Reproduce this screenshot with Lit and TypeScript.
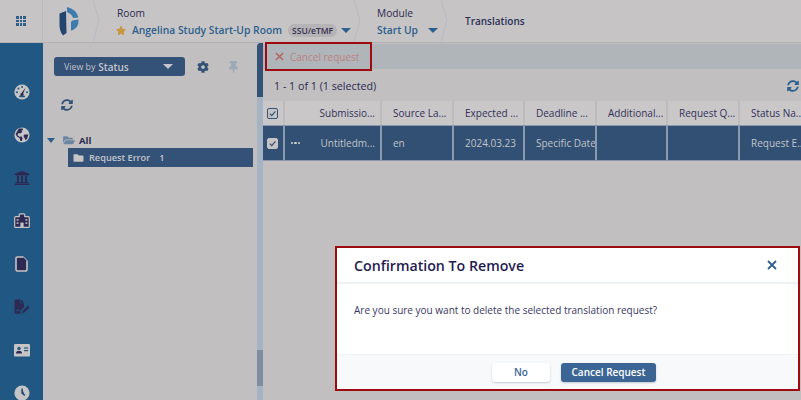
import { LitElement, html, css, svg } from "lit";
import { customElement } from "lit/decorators.js";

const SYNC = "M370.72 133.28C339.458 104.008 298.888 87.962 255.848 88c-77.458.068-144.328 53.178-162.791 126.85-1.344 5.363-6.122 9.15-11.651 9.15H24.103c-7.498 0-13.194-6.807-11.807-14.176C33.933 94.924 134.813 8 256 8c66.448 0 126.791 26.136 171.315 68.685L463.03 40.97C478.149 25.851 504 36.559 504 57.941V192c0 13.255-10.745 24-24 24H345.941c-21.382 0-32.09-25.851-16.971-40.971l41.75-41.749zM32 296h134.059c21.382 0 32.09 25.851 16.971 40.971l-41.75 41.75c31.262 29.273 71.835 45.319 114.876 45.28 77.418-.07 144.315-53.144 162.787-126.849 1.344-5.363 6.122-9.15 11.651-9.15h57.304c7.498 0 13.194 6.807 11.807 14.176C478.067 417.076 377.187 504 256 504c-66.448 0-126.791-26.136-171.315-68.685L48.97 471.03C33.851 486.149 8 475.441 8 454.059V320c0-13.255 10.745-24 24-24z";
const COG = "M487.4 315.7l-42.6-24.6c4.3-23.2 4.3-47 0-70.2l42.6-24.6c4.9-2.8 7.1-8.6 5.5-14-11.1-35.6-30-67.8-54.7-94.6-3.8-4.1-10-5.1-14.8-2.3L380.8 110c-17.9-15.4-38.5-27.3-60.8-35.1V25.8c0-5.6-3.9-10.5-9.4-11.7-36.7-8.2-74.3-7.8-109.2 0-5.5 1.2-9.4 6.1-9.4 11.7V75c-22.2 7.9-42.8 19.8-60.8 35.1L88.7 85.5c-4.9-2.8-11-1.9-14.8 2.3-24.7 26.7-43.6 58.9-54.7 94.6-1.7 5.4.6 11.2 5.5 14L67.3 221c-4.3 23.2-4.3 47 0 70.2l-42.6 24.6c-4.9 2.8-7.1 8.6-5.5 14 11.1 35.6 30 67.8 54.7 94.6 3.8 4.1 10 5.1 14.8 2.3l42.6-24.6c17.9 15.4 38.5 27.3 60.8 35.1v49.2c0 5.6 3.9 10.5 9.4 11.7 36.7 8.2 74.3 7.8 109.2 0 5.5-1.2 9.4-6.1 9.4-11.7v-49.2c22.2-7.9 42.8-19.8 60.8-35.1l42.6 24.6c4.9 2.8 11 1.9 14.8-2.3 24.7-26.7 43.6-58.9 54.7-94.6 1.5-5.5-.7-11.3-5.6-14.1zM256 336c-44.1 0-80-35.9-80-80s35.9-80 80-80 80 35.9 80 80-35.9 80-80 80z";
const STAR = "M259.3 17.8L194 150.2 47.9 171.5c-26.2 3.8-36.7 36.1-17.7 54.6l105.7 103-25 145.5c-4.5 26.3 23.2 46 46.4 33.7L288 439.6l130.7 68.7c23.2 12.2 50.9-7.4 46.4-33.7l-25-145.5 105.7-103c19-18.5 8.5-50.8-17.7-54.6L382 150.2 316.7 17.8c-11.7-23.6-45.6-23.9-57.4 0z";
const PIN = "M298.028 214.267L285.793 96H328c13.255 0 24-10.745 24-24V24c0-13.255-10.745-24-24-24H56C42.745 0 32 10.745 32 24v48c0 13.255 10.745 24 24 24h42.207L85.972 214.267C37.465 236.82 0 277.261 0 328c0 13.255 10.745 24 24 24h136v104.007c0 1.242.289 2.467.845 3.578l24 48c2.941 5.882 11.364 5.893 14.311 0l24-48a8.008 8.008 0 0 0 .845-3.578V352h136c13.255 0 24-10.745 24-24-.001-51.183-37.983-91.42-85.973-113.733z";
const FOLDER = "M464 128H272l-64-64H48C21.49 64 0 85.49 0 112v288c0 26.51 21.49 48 48 48h416c26.51 0 48-21.49 48-48V176c0-26.51-21.49-48-48-48z";
const FOLDER_OPEN = "M572.694 292.093L500.27 416.248A63.997 63.997 0 0 1 444.989 448H45.025c-18.523 0-30.064-20.093-20.731-36.093l72.424-124.155A64 64 0 0 1 152 256h399.964c18.523 0 30.064 20.093 20.73 36.093zM152 224h328v-48c0-26.51-21.49-48-48-48H272l-64-64H48C21.49 64 0 85.49 0 112v278.046l69.077-118.418C86.214 242.25 117.989 224 152 224z";
const BANK = "M496 128v16a8 8 0 0 1-8 8h-24v12c0 6.627-5.373 12-12 12H60c-6.627 0-12-5.373-12-12v-12H24a8 8 0 0 1-8-8v-16a8 8 0 0 1 4.941-7.392l232-88a7.996 7.996 0 0 1 6.118 0l232 88A8 8 0 0 1 496 128zm-24 304H40c-13.255 0-24 10.745-24 24v16a8 8 0 0 0 8 8h464a8 8 0 0 0 8-8v-16c0-13.255-10.745-24-24-24zM96 192v192H60c-6.627 0-12 5.373-12 12v20h416v-20c0-6.627-5.373-12-12-12h-36V192h-64v192h-64V192h-64v192h-64V192H96z";

const icon = (d: string, vb: string, cls: string) =>
  html`<svg class=${cls} viewBox=${vb}><path d=${d}></path></svg>`;

const NAV_FG = "#c6c4c4";
const NAV_BG = "#215783";

const navIcons = [
  svg`<circle cx="8" cy="8" r="7.6" fill=${NAV_FG}/><g fill=${NAV_BG}><circle cx="8" cy="3" r="1"/><circle cx="4.4" cy="4.6" r="1"/><circle cx="3" cy="8.2" r="1"/><circle cx="13" cy="8.2" r="1"/><path d="M11.6 3.6 L9.2 9.6 A1.6 1.6 0 1 1 7.6 9.1 Z"/><rect x="5" y="11.6" width="6" height="1.6" rx=".8"/></g>`,
  svg`<circle cx="8" cy="8" r="7.6" fill=${NAV_FG}/><g fill=${NAV_BG}><path d="M5 1.6 L8.5 1.4 L9.2 3 L7.4 3.6 L8.2 5 L6.6 6.2 L4.2 6.2 L3.4 8 L5.4 9.8 L7.6 9.6 L8.6 11.2 L7.8 14 L6.4 14 L5.6 11 L3 9.4 L1.6 7 Z"/><path d="M10.4 7.4 L14.4 7.6 L13 12 L11.4 13 L10.6 11 L9.4 9 Z"/></g>`,
  svg`<path transform="scale(.03125)" d=${BANK} fill=${NAV_FG}/>`,
  svg`<path d="M5.2 3.6 V1.8 a1 1 0 0 1 1-1 h3.6 a1 1 0 0 1 1 1 V3.6 H14.2 A1.1 1.1 0 0 1 15.3 4.7 V13.4 A1 1 0 0 1 14.3 14.4 H1.7 A1 1 0 0 1 .7 13.4 V4.7 A1.1 1.1 0 0 1 1.8 3.6 Z" fill=${NAV_BG} stroke=${NAV_FG} stroke-width="1.2"/><g fill=${NAV_FG}><path d="M7.4 2.4 h1.2 V3.6 H9.8 V4.8 H8.6 V6 H7.4 V4.8 H6.2 V3.6 H7.4 Z"/><rect x="2.6" y="6.2" width="2" height="1.4"/><rect x="11.4" y="6.2" width="2" height="1.4"/><rect x="2.6" y="9.4" width="2" height="1.4"/><rect x="11.4" y="9.4" width="2" height="1.4"/><rect x="6.4" y="9.6" width="3.2" height="4.8"/></g>`,
  svg`<path d="M3.4 1 H9 L13 5 V13.6 A1.4 1.4 0 0 1 11.6 15 H3.4 A1.4 1.4 0 0 1 2 13.6 V2.4 A1.4 1.4 0 0 1 3.4 1 Z" fill="none" stroke=${NAV_FG} stroke-width="1.6"/><path d="M9 1 V5 H13 Z" fill=${NAV_FG}/>`,
  svg`<path d="M1.6 .4 H6.6 L10 3.8 V8 L6.6 11.6 V14.8 H1.6 A1 1 0 0 1 .6 13.8 V1.4 A1 1 0 0 1 1.6 .4 Z" fill=${NAV_FG}/><path d="M6.4 .6 V4 H9.8" fill="none" stroke=${NAV_BG} stroke-width=".7"/><path d="M2 12.6 L3.6 10.2 L4.6 12 L6.2 11.2" fill="none" stroke=${NAV_BG} stroke-width=".9"/><path d="M13.8 6.6 L16 8.6 L10 14 L7.6 14.4 L8 12.2 Z" fill=${NAV_FG} stroke=${NAV_BG} stroke-width=".6"/>`,
  svg`<rect x="0" y="2" width="16" height="12.4" rx="1.2" fill=${NAV_FG}/><g fill=${NAV_BG}><circle cx="5" cy="6.4" r="1.7"/><path d="M2 11.4 Q2 8.8 5 8.8 Q8 8.8 8 11.4 Z"/><rect x="10" y="5.4" width="4.2" height="1.2"/><rect x="10" y="8" width="4.2" height="1.2"/></g>`,
  svg`<circle cx="8" cy="8" r="7.6" fill=${NAV_FG}/><path d="M8 3.4 V8.2 L10.8 10.4" fill="none" stroke=${NAV_BG} stroke-width="1.5"/>`,
];

const columns = [
  { label: "Submissio...", value: "Untitledm..." },
  { label: "Source La...", value: "en" },
  { label: "Expected ...", value: "2024.03.23" },
  { label: "Deadline ...", value: "Specific Date" },
  { label: "Additional...", value: "" },
  { label: "Request Q...", value: "" },
  { label: "Status Na..", value: "Request E.." },
];

@customElement("app-root")
export class AppRoot extends LitElement {
  static styles = css`
    :host {
      display: block;
      position: relative;
      width: 801px;
      height: 400px;
      overflow: hidden;
      font-family: "Open Sans", "Noto Sans", sans-serif;
      color: #2c2a52;
      background: #c1bfbf;
    }
    svg { display: block; flex: none; }
    svg path { fill: currentColor; }

    .top {
      display: flex;
      height: 43px;
      background: #c6c4c4;
      border-bottom: 1px solid #b3b1b5;
      box-sizing: border-box;
    }
    .apps {
      width: 43px;
      flex: none;
      display: flex;
      align-items: center;
      justify-content: center;
      border-right: 1px solid #bcbabb;
      box-sizing: border-box;
    }
    .apps-grid {
      display: grid;
      grid-template-columns: repeat(3, 2.6px);
      gap: .8px;
      width: 9.4px;
    }
    .apps-grid i { height: 2.6px; background: #315d88; display: block; }
    .crumb {
      position: relative;
      flex: none;
      box-sizing: border-box;
      height: 42px;
    }
    .crumb > .chev {
      position: absolute;
      right: -6px;
      top: 0;
      width: 7px;
      height: 42px;
      fill: none;
      stroke: #b6bcc4;
      stroke-width: 1;
    }
    .crumb > .chev polyline { fill: none; }
    .logo-crumb {
      width: 51px;
      display: flex;
      align-items: center;
      justify-content: center;
    }
    .logo { width: 20px; height: 30px; margin-left: 1px; }
    .room { width: 261px; padding: 6px 0 0 23px; }
    .module { width: 87px; padding: 6px 0 0 22px; }
    .page { padding: 0 0 0 23px; font-size: 10px; font-weight: 600; line-height: 42px; color: #2c3058; }
    .cr-label { font-size: 10.2px; font-weight: 500; line-height: 15px; color: #2c2a52; }
    .cr-value {
      display: flex;
      align-items: center;
      font-size: 10.3px;
      font-weight: 600;
      line-height: 16px;
      margin-top: 1px;
      color: #2d5f8e;
      white-space: nowrap;
    }
    .star { width: 10px; height: 9px; color: #c9973f; margin: 0 6px 0 -1px; }
    .badge {
      font-size: 8.5px;
      font-weight: 600;
      color: #33304f;
      background: #b5b3b5;
      border-radius: 7px;
      padding: 0 4px;
      line-height: 13px;
      margin: 0 4px 0 6px;
    }
    .caret {
      width: 0;
      height: 0;
      border-left: 5px solid transparent;
      border-right: 5px solid transparent;
      border-top: 5px solid #2d5f8e;
      display: block;
      flex: none;
    }
    .module .caret { margin-left: 10px; }

    .main { display: flex; height: 357px; }
    .nav {
      width: 43px;
      flex: none;
      background: #215783;
      box-sizing: border-box;
      padding-top: 27px;
      display: flex;
      flex-direction: column;
      align-items: center;
    }
    .nav-item { height: 43px; flex: none; display: flex; align-items: center; justify-content: center; }
    .nav-item svg { width: 16px; height: 16px; }

    .side { width: 214px; flex: none; box-sizing: border-box; padding: 14px 4px 0 11px; }
    .side-tools { display: flex; align-items: center; }
    .viewby {
      width: 131px;
      height: 19px;
      box-sizing: border-box;
      background: #345177;
      border-radius: 3px;
      color: #c4c6cc;
      display: flex;
      align-items: center;
      padding: 0 10px;
      font-size: 8.8px;
      white-space: nowrap;
    }
    .viewby b { font-size: 10px; font-weight: 600; margin-left: 3px; }
    .viewby .caret { margin-left: auto; margin-right: 2px; border-top-color: #c4c6cc; }
    .gear { width: 12px; height: 12px; color: #345177; margin-left: 12px; }
    .pin { width: 9px; height: 12px; color: #9ca9b8; margin-left: 20px; }
    .sync { width: 12px; height: 12px; color: #345177; }
    .side-sync { margin: 23px 0 0 7px; }
    .tree { margin: 23px 0 0 -7px; }
    .tree-all { display: flex; align-items: center; height: 12px; font-size: 9.5px; font-weight: 700; color: #2a2850; }
    .tree-all .caret { border-left-width: 4.5px; border-right-width: 4.5px; border-top-color: #2d5f8e; }
    .folder-open { width: 12px; height: 10.5px; color: #6b86a3; margin: 0 0 0 8px; }
    .tree-all span { margin-left: 4px; }
    .tree-sel {
      display: flex;
      align-items: center;
      height: 19px;
      margin: 2px 0 0 21px;
      background: #345177;
      color: #c4c6cc;
      font-size: 9.2px;
      font-weight: 600;
      box-sizing: border-box;
      padding-left: 5px;
      white-space: nowrap;
    }
    .tree-sel svg { width: 11px; height: 10px; color: #c6c4c4; margin-right: 5px; }
    .tree-sel em { font-style: normal; margin-left: 9px; }

    .split { width: 6px; flex: none; background: #a6b3c2; display: flex; flex-direction: column; }
    .split-head { height: 54px; background: #345177; border-top-left-radius: 4px; }
    .split-thumb { height: 36px; margin-top: 253px; background: #7d8da2; }

    .content { flex: 1; min-width: 0; }
    .actions {
      height: 25px;
      margin-top: 1px;
      background: #b0b5ba;
      display: flex;
      align-items: center;
      padding-left: 12px;
      font-size: 10px;
      color: #bf8182;
    }
    .actions svg { width: 9px; height: 9px; margin-right: 6px; fill: none; stroke: #b5625f; stroke-width: 1.6; }
    .actions svg path { fill: none; }
    .count {
      height: 32px;
      box-sizing: border-box;
      display: flex;
      align-items: center;
      justify-content: space-between;
      padding: 1px 0 0 11px;
      font-size: 10.7px;
      color: #2c2a52;
    }
    .count .sync { margin-right: 2px; color: #2d5f8e; }
    .table {
      display: grid;
      grid-template-columns: 22px 22px 75px 72px 71px 72px 71px 72px 61px;
      grid-template-rows: 24px 36px;
      font-size: 10px;
      white-space: nowrap;
    }
    .hcell {
      background: #c9c7c7;
      border-right: 2px solid #bdbbbb;
      box-sizing: border-box;
      display: flex;
      align-items: center;
      padding-left: 11px;
      color: #33315a;
      overflow: hidden;
    }
    .cell {
      background: #325074;
      border-right: 2px solid #8a99ad;
      border-top: 1px solid #8a99ad;
      border-bottom: 1px solid #8a99ad;
      box-sizing: border-box;
      display: flex;
      align-items: center;
      padding-left: 11px;
      color: #c0c4ca;
      overflow: hidden;
    }
    .first { padding-left: 1px; }
    .sub { justify-content: flex-end; padding: 0 5px 0 0; }
    .plain { border-right: 0; padding-left: 6px; }
    .end { border-right: 0; }
    .check {
      width: 11px;
      height: 11px;
      box-sizing: border-box;
      border: 1px solid #345177;
      border-radius: 2px;
      background: #c6c4c4;
      margin-left: 3px;
    }
    .cell .check { border-color: #c6c4c4; }
    .check svg { width: 9px; height: 9px; fill: none; stroke: #345177; stroke-width: 1.3; }
    .check svg path { fill: none; }
    .dots { display: flex; gap: 1px; }
    .dots i { width: 2.4px; height: 2.4px; background: #d0d0d0; border-radius: 1px; display: block; }

    .highlight {
      position: absolute;
      left: 265px;
      top: 42px;
      width: 107px;
      height: 29px;
      box-sizing: border-box;
      border: 2px solid #9e0b0f;
    }
    .modal {
      position: absolute;
      left: 335px;
      top: 246px;
      width: 465px;
      height: 145px;
      box-sizing: border-box;
      border: 2px solid #9e0b0f;
      background: #fff;
      display: flex;
      flex-direction: column;
    }
    .m-head {
      height: 36px;
      flex: none;
      box-sizing: border-box;
      border-bottom: 2px solid #eef2f6;
      display: flex;
      align-items: center;
      justify-content: space-between;
      padding: 0 21px 0 17px;
      font-size: 14.2px;
      font-weight: 600;
      color: #1f1c52;
    }
    .m-head svg { width: 10px; height: 10px; fill: none; stroke: #2f5e92; stroke-width: 1.8; }
    .m-head svg path { fill: none; }
    .m-body {
      flex: 1;
      padding: 19px 0 0 17px;
      font-size: 10px;
      line-height: 14px;
      color: #3a3766;
    }
    .m-foot {
      height: 35px;
      flex: none;
      box-sizing: border-box;
      background: #f8f9fa;
      border-top: 1px solid #eff1f3;
      display: flex;
      align-items: center;
      justify-content: flex-end;
      gap: 11px;
      padding: 0 142px 0 0;
    }
    .btn {
      height: 19px;
      border: 0;
      border-radius: 3px;
      font: 600 10px "Open Sans", "Noto Sans", sans-serif;
      padding: 0;
      box-shadow: 0 1px 2px rgba(40, 60, 90, .25);
    }
    .no { width: 58px; background: #fff; color: #3a6593; }
    .ok { width: 95px; background: #3a6595; color: #fff; }
  `;

  private checkbox() {
    return html`<div class="check"><svg viewBox="0 0 10 10"><path d="M2 5.2 L4.2 7.4 L8.2 2.6"></path></svg></div>`;
  }

  render() {
    return html`
      <div class="top">
        <div class="apps"><div class="apps-grid">${Array.from({ length: 9 }, () => html`<i></i>`)}</div></div>
        <div class="crumb logo-crumb">
          <svg class="logo" viewBox="0 0 20 30">
            <path style="fill:#24456f" d="M.5 7.5 L7 5 L7.5 27 L4 29.5 Q.5 25 .5 19 Z"></path>
            <path style="fill:#3c7cac" d="M8 1 Q17 3 19.5 11.5 L14 12 Q13 8 8 6 Z"></path>
            <path style="fill:#3c7cac" d="M13.5 14.5 L19.5 13.5 Q20 21 14 24 L12 24.5 L12 16 Z"></path>
          </svg>
          <svg class="chev" viewBox="0 0 7 42"><polyline points="0,0 6,20 0,42"></polyline></svg>
        </div>
        <div class="crumb room">
          <div class="cr-label">Room</div>
          <div class="cr-value">
            ${icon(STAR, "0 0 576 512", "star")}Angelina Study Start-Up Room<span class="badge">SSU/eTMF</span><span class="caret"></span>
          </div>
          <svg class="chev" viewBox="0 0 7 42"><polyline points="0,0 6,20 0,42"></polyline></svg>
        </div>
        <div class="crumb module">
          <div class="cr-label">Module</div>
          <div class="cr-value">Start Up<span class="caret"></span></div>
          <svg class="chev" viewBox="0 0 7 42"><polyline points="0,0 6,20 0,42"></polyline></svg>
        </div>
        <div class="crumb page">Translations</div>
      </div>
      <div class="main">
        <nav class="nav">
          ${navIcons.map((g) => html`<div class="nav-item"><svg viewBox="0 0 16 16">${g}</svg></div>`)}
        </nav>
        <aside class="side">
          <div class="side-tools">
            <div class="viewby">View by <b>Status</b><span class="caret"></span></div>
            ${icon(COG, "0 0 512 512", "gear")}
            ${icon(PIN, "0 0 384 512", "pin")}
          </div>
          <div class="side-sync">${icon(SYNC, "0 0 512 512", "sync")}</div>
          <div class="tree">
            <div class="tree-all"><i class="caret"></i>${icon(FOLDER_OPEN, "0 0 576 512", "folder-open")}<span>All</span></div>
            <div class="tree-sel">${icon(FOLDER, "0 0 512 512", "")}Request Error<em>1</em></div>
          </div>
        </aside>
        <div class="split"><div class="split-head"></div><div class="split-thumb"></div></div>
        <section class="content">
          <div class="actions">
            <svg viewBox="0 0 10 10"><path d="M1 1 L9 9 M9 1 L1 9"></path></svg>Cancel request
          </div>
          <div class="count"><span>1 - 1 of 1 (1 selected)</span>${icon(SYNC, "0 0 512 512", "sync")}</div>
          <div class="table">
            <div class="hcell first">${this.checkbox()}</div>
            <div class="hcell plain"></div>
            ${columns.map((c, i) => html`<div class="hcell ${i === 0 ? "sub" : ""} ${i === 6 ? "end" : ""}">${c.label}</div>`)}
            <div class="cell first">${this.checkbox()}</div>
            <div class="cell plain"><div class="dots"><i></i><i></i><i></i></div></div>
            ${columns.map((c, i) => html`<div class="cell ${i === 0 ? "sub" : ""} ${i === 6 ? "end" : ""}">${c.value}</div>`)}
          </div>
        </section>
      </div>
      <div class="highlight"></div>
      <div class="modal" role="dialog">
        <div class="m-head">Confirmation To Remove
          <svg viewBox="0 0 10 10"><path d="M1 1 L9 9 M9 1 L1 9"></path></svg>
        </div>
        <div class="m-body">Are you sure you want to delete the selected translation request?</div>
        <div class="m-foot">
          <button class="btn no">No</button>
          <button class="btn ok">Cancel Request</button>
        </div>
      </div>
    `;
  }
}
